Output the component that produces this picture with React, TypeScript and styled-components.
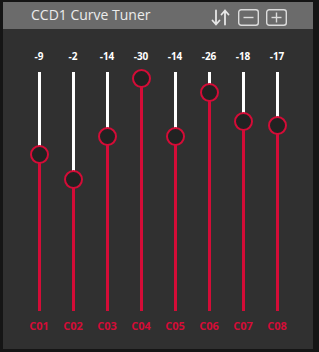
import * as React from "react";
import styled, { createGlobalStyle } from "styled-components";

const GlobalStyle = createGlobalStyle`
  html, body {
    margin: 0;
    padding: 0;
    background: #151515;
  }
  body {
    font-family: "Open Sans", "Noto Sans", sans-serif;
  }
`;

const RED = "#d40c37";
const TRACK_TOP = 72;
const TOP_CENTER = 78;
const STEP = 3.64;

type Channel = { id: string; value: number };

const channels: Channel[] = [
  { id: "C01", value: -9 },
  { id: "C02", value: -2 },
  { id: "C03", value: -14 },
  { id: "C04", value: -30 },
  { id: "C05", value: -14 },
  { id: "C06", value: -26 },
  { id: "C07", value: -18 },
  { id: "C08", value: -17 },
];

const Panel = styled.div`
  width: 310px;
  height: 347px;
  margin: 2px 0 0 3px;
  background: #303030;
  display: flex;
  flex-direction: column;
`;

const TitleBar = styled.div`
  height: 27px;
  background: #6b6b6b;
  display: flex;
  align-items: center;
  padding: 0 0 0 28px;
  box-sizing: border-box;
`;

const Title = styled.div`
  flex: 1;
  color: #ececec;
  font-size: 14px;
  margin-top: -2px;
`;

const Tools = styled.div`
  display: flex;
  align-items: center;
  gap: 7px;
  margin: 3px 26px 0 0;
`;

const IconButton = styled.button`
  width: 21px;
  height: 17px;
  padding: 0;
  border: none;
  background: transparent;
  display: flex;
  align-items: center;
  justify-content: center;
  cursor: pointer;
`;

const Sliders = styled.div`
  flex: 1;
  display: grid;
  grid-template-columns: repeat(8, 34px);
  padding: 0 19px;
`;

const Column = styled.div`
  display: flex;
  flex-direction: column;
  align-items: center;
`;

const Value = styled.div`
  margin-top: 19px;
  height: 16px;
  line-height: 16px;
  color: #ffffff;
  font-size: 10px;
  font-weight: 700;
`;

const Track = styled.div`
  position: relative;
  margin-top: ${TRACK_TOP - 2 - 27 - 19 - 16}px;
  width: 3px;
  height: 239px;
  background: ${RED};
`;

const Fill = styled.div`
  width: 3px;
  background: #ffffff;
`;

const Thumb = styled.div`
  position: absolute;
  left: 50%;
  width: 19px;
  height: 19px;
  margin-left: -9.5px;
  margin-top: -9.5px;
  box-sizing: border-box;
  border-radius: 50%;
  border: 2px solid ${RED};
  background: #222222;
`;

const Label = styled.div`
  margin-top: 7px;
  color: ${RED};
  font-size: 11px;
  font-weight: 700;
`;

const SortIcon = () => (
  <svg width="20" height="17" viewBox="0 0 20 17" fill="none" stroke="#e6e6e6" strokeWidth="1.8" strokeLinecap="round" strokeLinejoin="round">
    <path d="M5 1.5v14M1.5 11.5l3.5 4 3.5-4" />
    <path d="M14 15.5v-14M10.5 5.5l3.5-4 3.5 4" />
  </svg>
);

const BoxIcon = ({ plus }: { plus?: boolean }) => (
  <svg width="21" height="17" viewBox="0 0 21 17" fill="none" stroke="#dcdcdc" strokeWidth="1.4">
    <rect x="0.7" y="0.7" width="19.6" height="15.6" rx="2.5" />
    <path d="M5.5 8.5h10" />
    {plus && <path d="M10.5 3.5v10" />}
  </svg>
);

export default function App() {
  return (
    <>
      <GlobalStyle />
      <Panel>
        <TitleBar>
          <Title>CCD1 Curve Tuner</Title>
          <Tools>
            <IconButton>
              <SortIcon />
            </IconButton>
            <IconButton>
              <BoxIcon />
            </IconButton>
            <IconButton>
              <BoxIcon plus />
            </IconButton>
          </Tools>
        </TitleBar>
        <Sliders>
          {channels.map((c) => {
            const center = TOP_CENTER + (c.value + 30) * STEP - TRACK_TOP;
            return (
              <Column key={c.id}>
                <Value>{c.value}</Value>
                <Track>
                  <Fill style={{ height: Math.max(0, center) }} />
                  <Thumb style={{ top: center }} />
                </Track>
                <Label>{c.id}</Label>
              </Column>
            );
          })}
        </Sliders>
      </Panel>
    </>
  );
}
